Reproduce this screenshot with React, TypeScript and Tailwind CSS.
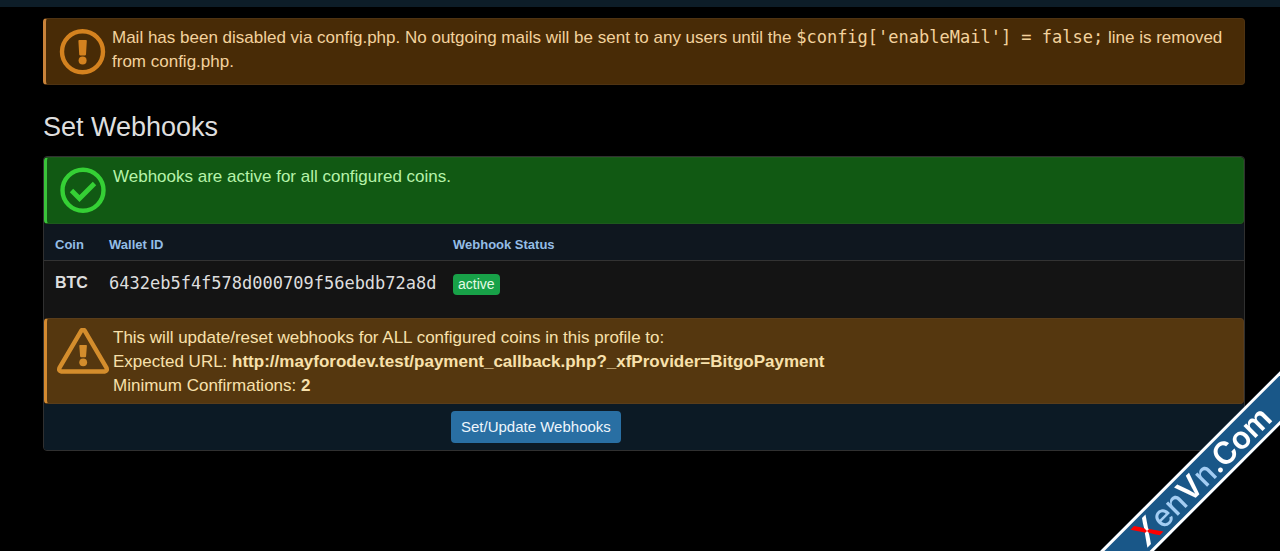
import type { ReactNode } from "react";
import clsx from "clsx";

type NoticeProps = {
  icon: ReactNode;
  className: string;
  children: ReactNode;
};

const Notice = ({ icon, className, children }: NoticeProps) => (
  <div className={clsx("flex gap-1 rounded border border-l-[3px] pl-2.5 pr-5 text-[17px]", className)}>
    <div className="shrink-0 py-[9px]">{icon}</div>
    <div className="pt-[7px] pb-[5px]">{children}</div>
  </div>
);

const ExclamationCircle = () => (
  <svg width="52" height="47" viewBox="0 0 52 47" fill="none" aria-hidden="true">
    <circle cx="26.5" cy="23.8" r="20.5" stroke="currentColor" strokeWidth="4.4" />
    <path d="M23.2 12h6.800q.9 0 .8.900l-.8 13.600q-.1 1.100-1.200 1.100h-4.400q-1.100 0-1.200-1.100l-.8-13.600q0-.9.8-.9z" fill="currentColor" />
    <circle cx="26.600" cy="32.500" r="4" fill="currentColor" />
  </svg>
);

const CheckCircle = () => (
  <svg width="52" height="47" viewBox="0 0 52 47" fill="none" aria-hidden="true">
    <circle cx="26" cy="23.2" r="20.5" stroke="currentColor" strokeWidth="4.4" />
    <path d="M14.500 23.500l8 8L37.500 16.500" stroke="currentColor" strokeWidth="4.800" />
  </svg>
);

const ExclamationTriangle = () => (
  <svg width="52" height="47" viewBox="0 0 52 47" fill="none" aria-hidden="true">
    <path
      d="M24.200 2.800q1.800-2.600 3.600 0l21.600 36.900q1.400 3.300-1.800 3.800H4.400q-3.200-.5-1.800-3.800z"
      stroke="currentColor"
      strokeWidth="4.400"
      strokeLinejoin="round"
    />
    <path d="M23 17h6.200q.8 0 .7.800l-.8 10.500q-.1 1-1 1h-4q-.9 0-1-1l-.8-10.500q0-.8.700-.8z" fill="currentColor" />
    <circle cx="26.200" cy="34.300" r="3.900" fill="currentColor" />
  </svg>
);

const coins = [{ coin: "BTC", walletId: "6432eb5f4f578d000709f56ebdb72a8d", status: "active" }];

export default function App() {
  return (
    <div className="min-h-screen bg-black font-['Liberation_Sans',Arial,sans-serif] text-[16px] leading-6 text-[#dedede]">
      <header className="h-[7px] bg-[#0d1d28]" />

      <main className="pt-[11px] pr-[35px] pb-10 pl-[43px]">
        <Notice
          icon={
            <span className="text-[#d4821f]">
              <ExclamationCircle />
            </span>
          }
          className="border-[#4f3312] border-l-[#c9833a] bg-[#482b06] text-[#f3d29d]"
        >
          Mail has been disabled via config.php. No outgoing mails will be sent to any users until the{" "}
          <code className="font-['DejaVu_Sans_Mono',monospace] leading-5">$config['enableMail'] = false;</code> line is
          removed from config.php.
        </Notice>

        <h1 className="mt-6 mb-[11px] text-[27px] leading-9">Set Webhooks</h1>

        <form
          className="overflow-hidden rounded border border-[#303030] bg-[#141414]"
          onSubmit={(e) => e.preventDefault()}
        >
          <Notice
            icon={
              <span className="text-[#35d035]">
                <CheckCircle />
              </span>
            }
            className="border-[#1d5a1c] border-l-[#3ac43a] bg-[#115913] text-[#b6f3a9]"
          >
            Webhooks are active for all configured coins.
          </Notice>

          <table className="w-full text-left">
            <thead>
              <tr className="border-b border-[#333] bg-[#0f171f] text-[13px] leading-5 text-[#94bde6]">
                <th className="w-[54px] pt-[11px] pb-[5px] pl-[11px]">Coin</th>
                <th className="w-[344px] pt-[11px] pb-[5px] pl-[11px]">Wallet ID</th>
                <th className="pt-[11px] pb-[5px] pl-[11px]">Webhook Status</th>
              </tr>
            </thead>
            <tbody>
              {coins.map((row) => (
                <tr key={row.coin} className="align-top">
                  <td className="pt-2.5 pb-[22px] pl-[11px] font-bold">{row.coin}</td>
                  <td className="pt-2.5 pb-[22px] pl-[11px]">
                    <code className="font-['DejaVu_Sans_Mono',monospace] text-[17px]">{row.walletId}</code>
                  </td>
                  <td className="pt-[13px] pl-[11px]">
                    <span className="block w-fit rounded bg-[#18a148] px-[5px] text-[14px] leading-[21px] text-[#e4fbe4]">
                      {row.status}
                    </span>
                  </td>
                </tr>
              ))}
            </tbody>
          </table>

          <Notice
            icon={
              <span className="text-[#d48d2c]">
                <ExclamationTriangle />
              </span>
            }
            className="border-[#5a3d1a] border-l-[#d48a30] bg-[#55370f] text-[#f8e1ac]"
          >
            This will update/reset webhooks for ALL configured coins in this profile to:
            <br />
            Expected URL: <b>http://mayforodev.test/payment_callback.php?_xfProvider=BitgoPayment</b>
            <br />
            Minimum Confirmations: <b>2</b>
          </Notice>

          <div className="flex bg-[#0c1a25] pt-[7px] pb-[7px]">
            <div className="w-1/3" />
            <button
              type="submit"
              className="ml-[7px] h-8 rounded bg-[#296fa3] px-2.5 text-[15px] leading-5 text-[#eef6fc]"
            >
              Set/Update Webhooks
            </button>
          </div>
        </form>
      </main>

      {/* Corner ribbon */}
      <div className="pointer-events-none fixed right-0 bottom-0 size-[190px] overflow-hidden">
        <div className="absolute top-[93px] left-[-35px] flex h-[38px] w-[300px] -rotate-45 items-center justify-center border-y-[3px] border-white bg-[#195788] pr-2 font-['Inter',sans-serif] text-[31px] leading-8 font-semibold text-white">
          <span className="bg-[conic-gradient(white_25%,red_25%_50%,white_50%_75%,red_75%)] bg-clip-text text-[34px] text-transparent">
            X
          </span>
          <span className="font-medium text-[#a3cdf3]">en</span>
          <span>V</span>
          <span className="font-medium text-[#a3cdf3]">n</span>
          <span>.Com</span>
        </div>
      </div>
    </div>
  );
}
